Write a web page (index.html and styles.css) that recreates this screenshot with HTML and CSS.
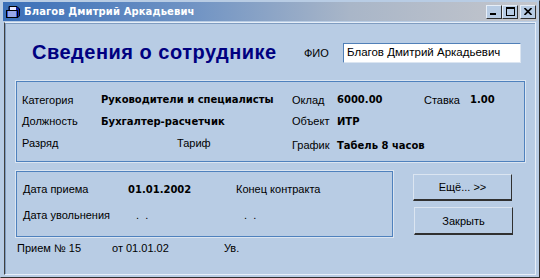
FILE: index.html
```html
<!DOCTYPE html>
<html lang="ru">
<head>
    <meta charset="UTF-8" />
    <title>Благов Дмитрий Аркадьевич</title>
    <link rel="stylesheet" href="styles.css">
</head>
<body>
    <div class="window">
        <div class="titlebar">
            <svg class="app-icon" width="16" height="16" viewBox="0 0 16 16">
                <rect x="1.5" y="6.5" width="11" height="7" fill="#3050d0" stroke="#000" />
                <path d="M4 2.5 L12 2.5 L14.5 5 L14.5 12 L12.5 13.5 L12.5 6.5 L4 6.5 Z" fill="#1020a0" stroke="#000" />
                <path d="M3 8 H11 M3 10 H11 M3 12 H11" stroke="#fff" stroke-width="1" />
                <rect x="5" y="3" width="6" height="3" fill="#e8e8ff" />
            </svg>
            <span class="title-text">Благов Дмитрий Аркадьевич</span>
            <div class="title-buttons">
                <span class="tbtn"><svg width="8" height="7" viewBox="0 0 8 7"><rect x="0" y="5" width="6" height="2" fill="#000"/></svg></span>
                <span class="tbtn"><svg width="9" height="9" viewBox="0 0 9 9"><rect x="0.5" y="0.5" width="8" height="8" fill="none" stroke="#000"/><rect x="0" y="0" width="9" height="2" fill="#000"/></svg></span>
                <span class="tbtn close"><svg width="8" height="7" viewBox="0 0 8 7"><path d="M0.5 0 L7.5 7 M7.5 0 L0.5 7" stroke="#000" stroke-width="1.6"/></svg></span>
            </div>
        </div>

        <div class="client">
            <div class="header">
                <h1>Сведения о сотруднике</h1>
                <span class="fio-label">ФИО</span>
                <div class="fio-input">Благов Дмитрий Аркадьевич</div>
            </div>

            <div class="panel panel-main">
                <span class="lbl">Категория</span>
                <span class="val">Руководители и специалисты</span>
                <span class="lbl">Оклад</span>
                <span class="val">6000.00</span>
                <span class="lbl">Ставка</span>
                <span class="val">1.00</span>

                <span class="lbl">Должность</span>
                <span class="val">Бухгалтер-расчетчик</span>
                <span class="lbl">Объект</span>
                <span class="val">ИТР</span>
                <span></span>
                <span></span>

                <span class="lbl">Разряд</span>
                <span class="lbl tarif">Тариф</span>
                <span class="lbl low">График</span>
                <span class="val low wide">Табель 8 часов</span>
            </div>

            <div class="lower">
                <div class="panel panel-dates">
                    <span class="lbl">Дата приема</span>
                    <span class="val">01.01.2002</span>
                    <span class="lbl">Конец контракта</span>

                    <span class="lbl">Дата увольнения</span>
                    <span class="lbl dots">.&nbsp;&nbsp;.</span>
                    <span class="lbl dots">.&nbsp;&nbsp;.</span>
                </div>
                <div class="buttons">
                    <button class="btn">Ещё... &gt;&gt;</button>
                    <button class="btn btn-tall">Закрыть</button>
                </div>
            </div>

            <div class="footer">
                <span class="f1">Прием № 15</span>
                <span class="f2">от 01.01.02</span>
                <span>Ув.</span>
            </div>
        </div>
    </div>
</body>
</html>
```

FILE: styles.css
```css
* { box-sizing: border-box; }
body {
    margin: 0;
    background: #b8cce4;
    font-family: "Liberation Sans", Arial, sans-serif;
    font-size: 11px;
    color: #000;
}
.window {
    width: 540px;
    height: 278px;
    background: #b8cce4;
    border: 1px solid;
    border-color: #b8cce4 #303030 #303030 #b8cce4;
    padding: 1px;
    display: flex;
    flex-direction: column;
}

/* ───── Title bar ───── */
.titlebar {
    height: 19px;
    margin: 0 1px;
    display: flex;
    align-items: center;
    padding-left: 2px;
    background: linear-gradient(to right, #3a6fb8 0%, #6f93c4 35%, #a9b6c8 65%, #c4c6cc 100%);
}
.app-icon { margin-right: 3px; }
.title-text {
    color: #fff;
    font-family: "DejaVu Sans", Verdana, sans-serif;
    font-weight: bold;
    font-size: 10px;
    letter-spacing: 0.1px;
    flex: 1;
}
.title-buttons {
    display: flex;
    margin-right: 1px;
}
.tbtn {
    width: 16px;
    height: 14px;
    background: #b8cce4;
    border: 1px solid;
    border-color: #e6eef8 #303030 #303030 #e6eef8;
    display: flex;
    align-items: center;
    justify-content: center;
}
.tbtn.close { margin-left: 2px; }

/* ───── Client area ───── */
.client {
    flex: 1;
    margin: 1px 2px 1px 2px;
    border: 1px solid;
    border-color: #e6eef8 #e6eef8 #e6eef8 #404040;
    box-shadow: inset 1px 1px 0 #7f9cc0;
    padding: 0 9px 0 9px;
    display: flex;
    flex-direction: column;
}
.header {
    display: flex;
    align-items: center;
    height: 57px;
    padding-top: 2px;
}
h1 {
    margin: 0 0 0 18px;
    font-family: "Liberation Sans", Arial, sans-serif;
    font-size: 20px;
    letter-spacing: 0.5px;
    font-weight: bold;
    color: #000080;
    width: 272px;
}
.fio-label { width: 39px; }
.fio-input {
    width: 178px;
    height: 20px;
    background: #fff;
    border: 1px solid;
    border-color: #5080b8 #dbe5f1 #dbe5f1 #5080b8;
    padding: 2px 3px;
    font-size: 11.5px;
    white-space: nowrap;
}

/* ───── Panels ───── */
.panel {
    border: 1px solid #dbe5f1;
    box-shadow: inset 0 0 0 1px #4f81bd;
}
.val {
    font-family: "DejaVu Sans", Verdana, sans-serif;
    font-weight: bold;
    font-size: 10px;
    white-space: nowrap;
}
.panel-main {
    margin-left: 1px;
    height: 83px;
    display: grid;
    grid-template-columns: 79px 191px 45px 87px 46px 1fr;
    grid-template-rows: 21px 22px 22px;
    align-items: center;
    padding: 8px 0 0 6px;
}
.wide { grid-column: span 3; }
.tarif { padding-left: 76px; }
.low { position: relative; top: 2px; }

.lower {
    display: flex;
    margin-top: 7px;
    margin-left: 1px;
}
.panel-dates {
    width: 379px;
    height: 68px;
    display: grid;
    grid-template-columns: 105px 108px 1fr;
    grid-template-rows: 26px 26px;
    align-items: center;
    padding: 5px 0 0 7px;
}
.dots { padding-left: 8px; }

.buttons {
    display: flex;
    flex-direction: column;
    gap: 6px;
    margin-left: 19px;
    margin-top: 4px;
}
.btn {
    width: 99px;
    height: 27px;
    background: #b8cce4;
    border: 1px solid;
    border-color: #dbe5f1 #303030 #303030 #dbe5f1;
    border-bottom-width: 2px;
    font-family: "Liberation Sans", Arial, sans-serif;
    font-size: 11px;
    color: #000;
    padding: 0;
}
.btn-tall { height: 28px; margin-left: 1px; }

.footer {
    display: flex;
    margin-top: 3px;
    padding-left: 3px;
    height: 14px;
    align-items: center;
}
.f1 { width: 95px; }
.f2 { width: 112px; }
```
